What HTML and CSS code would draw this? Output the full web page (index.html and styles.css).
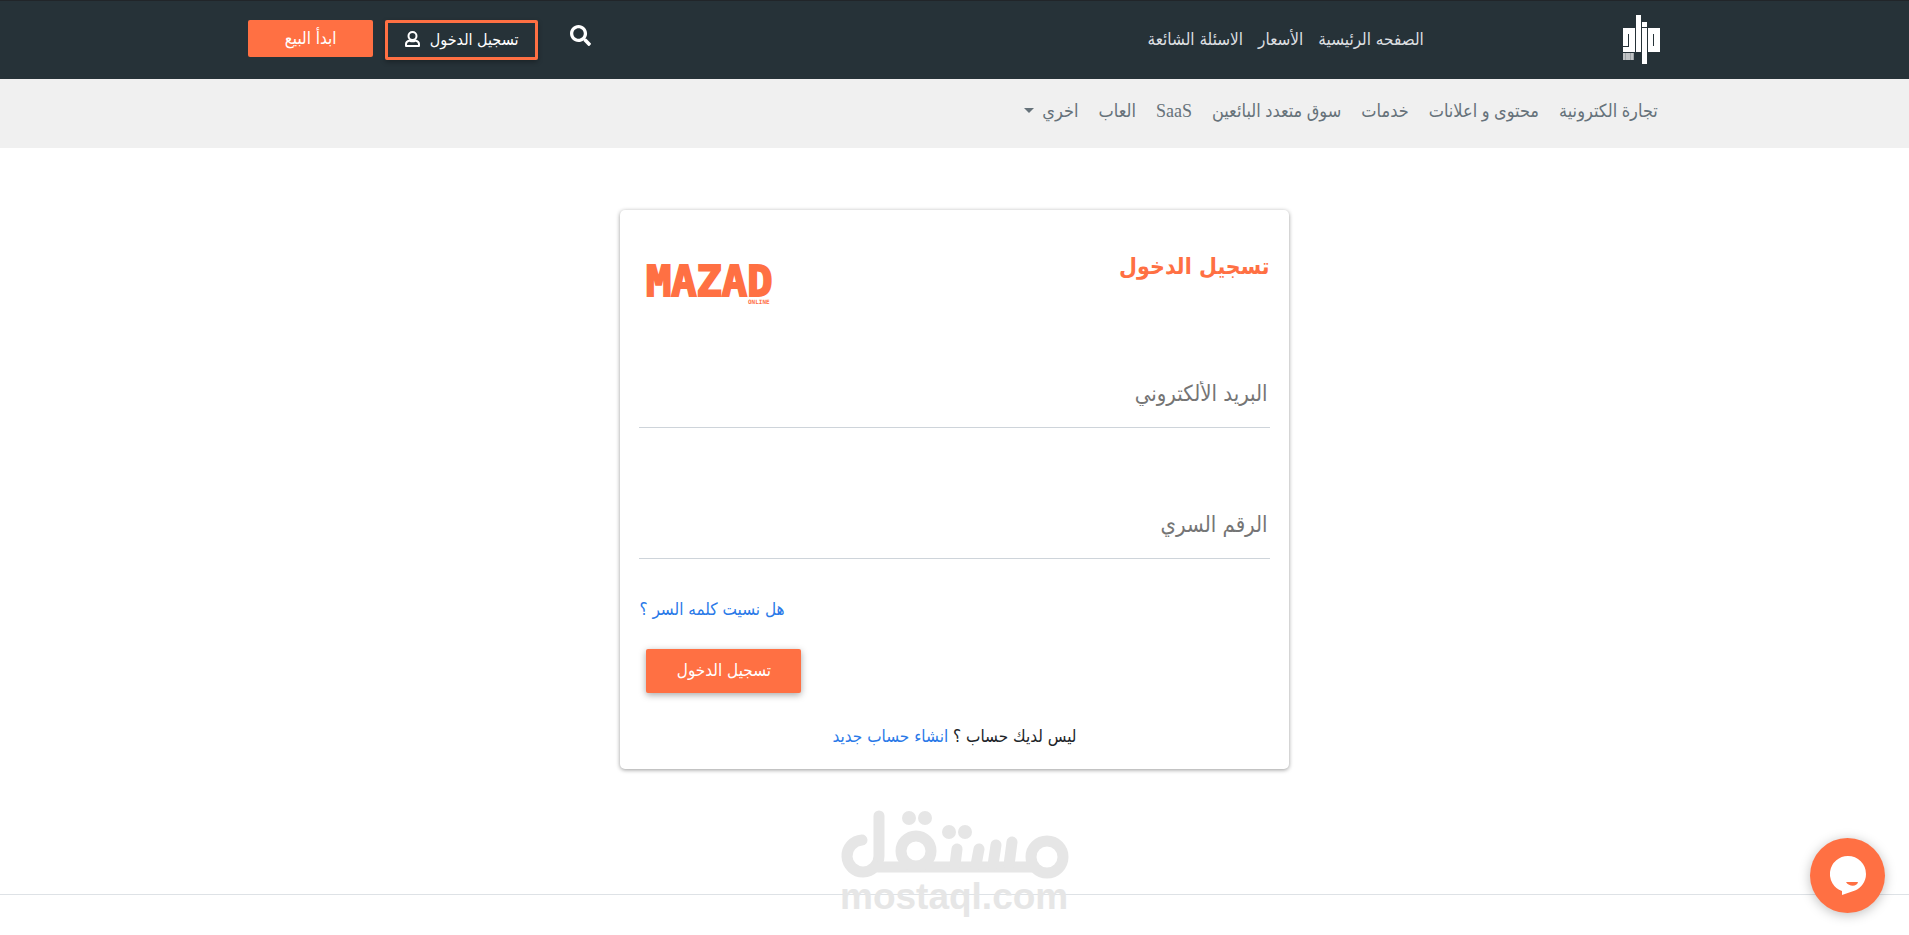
FILE: index.html
```html
<!DOCTYPE html>
<html lang="ar" dir="rtl">
<head>
  <meta charset="UTF-8" />
  <meta name="viewport" content="width=device-width, initial-scale=1.0"/>
  <title>تسجيل الدخول</title>
  <link rel="stylesheet" href="styles.css">
</head>
<body>
  <header class="topbar">
    <a class="brand" href="#" aria-label="مزاد">
      <svg width="38" height="50" viewBox="0 0 38 50" fill="#fff">
        <path fill-rule="evenodd" d="M0 13h12v24H0v-5h6V19H5v12H0z"/>
        <rect x="13" y="0" width="5" height="37"/>
        <rect x="19" y="7" width="5" height="5"/>
        <rect x="19" y="13" width="5" height="36"/>
        <path fill-rule="evenodd" d="M25 13h12v24H25zM30 19v12h1V19z"/>
        <rect x="0" y="38" width="11" height="7" opacity=".55"/>
        <path d="M1 38v7M4 38v7M6 38v7M9 38v7" stroke="#fff" stroke-width="1" opacity=".7"/>
      </svg>
    </a>
    <nav class="main-links">
      <a href="#">الصفحه الرئيسية</a>
      <a href="#">الأسعار</a>
      <a href="#">الاسئلة الشائعة</a>
    </nav>
    <div class="actions">
      <button class="search" type="button" aria-label="بحث">
        <svg width="21" height="21" viewBox="0 0 512 512" fill="#fff"><path d="M505 442.700L405.300 343c-4.500-4.500-10.600-7-17-7H372c27.600-35.300 44-79.700 44-128C416 93.100 322.900 0 208 0S0 93.100 0 208s93.100 208 208 208c48.300 0 92.700-16.400 128-44v16.300c0 6.400 2.500 12.500 7 17l99.700 99.700c9.400 9.400 24.600 9.400 33.900 0l28.300-28.300c9.400-9.400 9.400-24.600.1-34zM208 336c-70.700 0-128-57.200-128-128 0-70.700 57.200-128 128-128 70.700 0 128 57.200 128 128 0 70.700-57.200 128-128 128z"/></svg>
      </button>
      <a class="btn btn-outline" href="#">
        <span>تسجيل الدخول</span>
        <svg width="15" height="16" viewBox="0 0 15 16" fill="none" stroke="#fff" stroke-width="2"><circle cx="7.500" cy="5" r="4"/><path d="M4.500 9.500C2.500 10 1 11.300 1 13v2h13v-2c0-1.700-1.500-3-3.500-3.500-2 1-4 1-6 0z" stroke-linejoin="round"/></svg>
      </a>
      <a class="btn btn-solid" href="#">ابدأ البيع</a>
    </div>
  </header>

  <nav class="categories">
    <a href="#">تجارة الكترونية</a>
    <a href="#">محتوى و اعلانات</a>
    <a href="#">خدمات</a>
    <a href="#">سوق متعدد البائعين</a>
    <a href="#">SaaS</a>
    <a href="#">العاب</a>
    <a class="dropdown" href="#">اخري</a>
  </nav>

  <main>
    <form class="card">
      <div class="card-head">
        <h1>تسجيل الدخول</h1>
        <svg class="logo" width="130" height="58" viewBox="0 0 130 58" direction="ltr">
          <text class="logo-name" x="1" y="44">MAZAD</text>
          <text class="logo-sub" x="103" y="52">ONLINE</text>
        </svg>
      </div>
      <input class="field" type="email" placeholder="البريد الألكتروني" aria-label="البريد الألكتروني">
      <input class="field" type="password" placeholder="الرقم السري" aria-label="الرقم السري">
      <a class="forgot" href="#">هل نسيت كلمه السر ؟</a>
      <button class="submit" type="submit">تسجيل الدخول</button>
      <p class="signup">ليس لديك حساب ؟ <a href="#">انشاء حساب جديد</a></p>
    </form>
  </main>

  <footer>
    <svg class="watermark" width="234" height="112" viewBox="-2 0 234 112" direction="ltr">
      <g fill="none" stroke="#e6e6e6" stroke-width="11" stroke-linecap="round">
        <path d="M22 30A16 16 0 1 0 39 46V6"/>
        <path d="M38 57H194"/>
        <circle cx="76" cy="41" r="15"/>
        <circle cx="207" cy="47" r="16"/>
        <path d="M117 39L115 55M139 39L136 55M156 35L153 55M172 32L169 55"/>
      </g>
      <g fill="#e6e6e6">
        <circle cx="69" cy="8" r="7"/><circle cx="85" cy="8" r="7"/>
        <circle cx="109" cy="22" r="7"/><circle cx="125" cy="22" r="7"/>
      </g>
      <text class="watermark-name" x="0" y="99">mostaql.com</text>
    </svg>
  </footer>

  <button class="chat" type="button" aria-label="محادثة">
    <svg width="36" height="40" viewBox="0 0 36 40"><path fill="#fff" d="M18 0a18 18 0 0 1 18 18c0 8-5 14-11 16.500L12 39v-4A18 18 0 0 1 18 0z"/><path fill="#ff7043" d="M16 26h12c-1 5-9 5-12 0z"/></svg>
  </button>
</body>
</html>
```
FILE: styles.css
```css
:root {
  --orange: #ff7043;
  --dark: #263238;
  --link: #2979e8;
  --side: 13%;
}

* {
  box-sizing: border-box;
}

body {
  margin: 0;
  min-height: 100vh;
  font-family: "DejaVu Sans Condensed", "DejaVu Sans", sans-serif;
  font-size: 17px;
  color: #212529;
  background: #fff;
}

a {
  color: var(--link);
  text-decoration: none;
}

button {
  font-family: inherit;
  border: none;
  cursor: pointer;
}

svg {
  display: block;
}

.topbar {
  display: flex;
  align-items: flex-start;
  height: 79px;
  padding: 14px var(--side) 0;
  background: var(--dark);
  border-top: 1px solid #212529;
}

.main-links {
  display: flex;
  gap: 15px;
  margin-right: 199px;
  padding-top: 12px;
  line-height: 24px;
}

.main-links a {
  color: #dcdfe0;
}

.actions {
  display: flex;
  align-items: flex-start;
  gap: 12px;
  margin-right: auto;
  padding-top: 5px;
}

.search {
  margin-left: 20px;
  padding: 5px 0;
  background: none;
}

.btn {
  display: flex;
  align-items: center;
  justify-content: center;
  padding-bottom: 2px;
  border-radius: 2px;
  color: #fff;
  white-space: nowrap;
}

.btn-outline {
  gap: 10px;
  width: 153px;
  height: 40px;
  border: 3px solid var(--orange);
  font-size: 16px;
  box-shadow: 0 2px 5px rgba(0, 0, 0, 0.3);
}

.btn-solid {
  width: 125px;
  height: 37px;
  background: var(--orange);
}

.categories {
  display: flex;
  gap: 20px;
  height: 69px;
  padding: 20px var(--side) 0;
  background: #f0f0f0;
  font-family: "Liberation Serif", "DejaVu Sans Condensed", "DejaVu Sans", serif;
  font-size: 18px;
  line-height: 24px;
}

.categories a {
  color: #66727a;
}

.categories a:first-child {
  padding-right: 3px;
}

.dropdown::after {
  content: "";
  display: inline-block;
  margin-right: 8px;
  vertical-align: 4px;
  border-top: 5px solid #66727a;
  border-left: 5px solid transparent;
  border-right: 5px solid transparent;
}

.card {
  display: flex;
  flex-direction: column;
  width: 35%;
  min-width: 320px;
  margin: 62px auto 0;
  padding: 36px 19px 21px;
  border-radius: 5px;
  box-shadow: 0 1px 4px rgba(0, 0, 0, 0.4);
}

.card-head {
  display: flex;
  justify-content: space-between;
  height: 114px;
}

h1 {
  margin: 0;
  font-size: 23px;
  line-height: 40px;
  color: var(--orange);
}

.logo {
  margin: 6px 0 0 6px;
  fill: var(--orange);
}

.logo-name {
  font: bold 42px "DejaVu Sans Mono", monospace;
  stroke: var(--orange);
  stroke-width: 2px;
}

.logo-sub {
  font: bold 6px "DejaVu Sans Mono", monospace;
}

.field {
  width: 100%;
  height: 68px;
  margin-bottom: 63px;
  padding: 0 2px;
  border: none;
  border-bottom: 1px solid #ced4da;
  outline: none;
  font-family: inherit;
  font-size: 22px;
  background: none;
}

.field + .field {
  margin-bottom: 38px;
}

.field::placeholder {
  color: #757575;
}

.forgot {
  align-self: flex-end;
  line-height: 24px;
}

.submit {
  align-self: flex-end;
  width: 155px;
  height: 44px;
  margin: 28px 0 31px 7px;
  padding-bottom: 3px;
  border-radius: 2px;
  background: var(--orange);
  color: #fff;
  font-size: 17px;
  box-shadow: 0 2px 7px rgba(0, 0, 0, 0.35);
}

.signup {
  margin: 0;
  line-height: 24px;
  text-align: center;
}

footer {
  position: relative;
  margin-top: 125px;
  border-top: 1px solid #dee2e6;
}

.watermark {
  position: absolute;
  top: -85px;
  left: 50%;
  margin-left: -117px;
}

.watermark-name {
  font: bold 37px "Liberation Sans", sans-serif;
  fill: #e6e6e6;
}

.chat {
  position: fixed;
  right: 24px;
  bottom: 22px;
  display: flex;
  align-items: center;
  justify-content: center;
  width: 75px;
  height: 75px;
  padding: 0;
  border-radius: 50%;
  background: var(--orange);
  box-shadow: 0 2px 12px rgba(0, 0, 0, 0.25);
}
```
